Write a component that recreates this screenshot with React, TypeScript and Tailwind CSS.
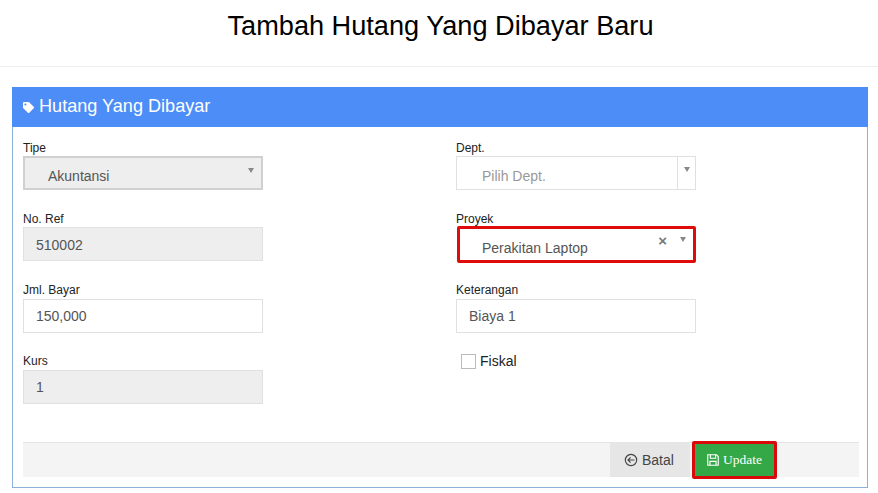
import { FaTag } from "react-icons/fa";

const Caret = () => <span className="block w-0 h-0 border-x-[3.5px] border-x-transparent border-t-[5px] border-t-[#888888]" />;

const Field = ({ label, wide, lift, children }: { label: string; wide?: boolean; lift?: boolean; children: React.ReactNode }) => (
    <div className={wide ? "mb-[21px]" : "mb-[20px]"}>
        <div className={`h-[17px] text-[12px] leading-[15px] text-[#222222] ${lift ? "pt-[1px]" : "pt-[2px]"}`}>{label}</div>
        {children}
    </div>
);

const TextBox = ({ value, disabled, lift }: { value: string; disabled?: boolean; lift?: boolean }) => (
    <div className={`h-[34px] w-[240px] border border-[#e0e0e0] px-[12px] text-[14px] text-[#555555] ${lift ? "leading-[32px]" : "leading-[34px]"} ${disabled ? "bg-[#eeeeee]" : "bg-white"}`}>
        {value}
    </div>
);

export default function App() {
    return (
        <div className="w-[878px] h-[493px] overflow-hidden bg-white font-['Liberation_Sans',Arial,sans-serif]">
            <div className="h-[67px] border-b border-[#eeeeee] pt-[8px] pl-[3px] text-center text-[27.15px] leading-[36px] text-black">
                Tambah Hutang Yang Dibayar Baru
            </div>

            <div className="mt-[20px] ml-[12px] w-[856px] h-[401px] border border-[#8db0d8]">
                <div className="-mt-px -mx-px h-[40px] bg-[#4d8df7] flex items-center pl-[11px] pb-[1px] text-white text-[18.1px]">
                    <FaTag className="w-[11px] h-[11px] mr-[5px] mt-[2px]" />
                    Hutang Yang Dibayar
                </div>

                <div className="pl-[10px] pr-[8px] pt-[12px]">
                    <div className="grid grid-cols-[433px_240px] h-[303px]">
                        <div>
                            <Field label="Tipe">
                                <div className="relative h-[34px] w-[240px] border-2 border-[#d0d0d0] bg-[#eeeeee] pl-[23px] text-[14px] leading-[36px] text-[#555555]">
                                    Akuntansi
                                    <span className="absolute right-[7px] top-[10px]"><Caret /></span>
                                </div>
                            </Field>
                            <Field label="No. Ref" wide><TextBox value="510002" disabled /></Field>
                            <Field label="Jml. Bayar" lift><TextBox value="150,000" lift /></Field>
                            <Field label="Kurs" lift><TextBox value="1" disabled lift /></Field>
                        </div>
                        <div>
                            <Field label="Dept.">
                                <div className="flex h-[34px] w-[240px] border border-[#e0e0e0] bg-white text-[14px] text-[#999999]">
                                    <div className="flex-1 pl-[25px] leading-[38px]">Pilih Dept.</div>
                                    <div className="w-[18px] border-l border-[#e0e0e0] flex justify-center pt-[10px]"><Caret /></div>
                                </div>
                            </Field>
                            <Field label="Proyek" wide>
                                <div className="relative h-[37px] w-[239px] ml-[1px] -mt-[1px] -mb-[2px] rounded-[2px] border-[3px] border-[#e00b0b] bg-white pl-[22px] text-[14px] leading-[38px] text-[#555555]">
                                    Perakitan Laptop
                                    <span className="absolute right-[26px] top-[2px] text-[15px] leading-[20px] font-bold text-[#777777]">×</span>
                                    <span className="absolute right-[7px] top-[8px]"><Caret /></span>
                                </div>
                            </Field>
                            <Field label="Keterangan" lift><TextBox value="Biaya 1" lift /></Field>
                            <div className="flex items-center ml-[5px] mt-[-2px] text-[14px] text-[#222222]">
                                <span className="w-[15px] h-[15px] border border-[#bbbbbb] bg-white mr-[4px]" />
                                Fiskal
                            </div>
                        </div>
                    </div>

                    <div className="flex justify-end h-[35px] w-[836px] border-t border-[#e4e4e4] bg-[#f4f4f4] pr-[82px]">
                        <div className="flex items-center h-[35px] -mt-px w-[80px] bg-[#e6e6e6] pl-[14px] pt-[1px] text-[14px] text-[#444444]">
                            <svg viewBox="0 0 16 16" className="w-[14px] h-[14px] mr-[4px]" fill="none" stroke="#444444" strokeWidth="1.3">
                                <circle cx="8" cy="8" r="6.5" />
                                <path d="M12 8H5M7.5 5L4.5 8l3 3" />
                            </svg>
                            Batal
                        </div>
                        <div className="relative -mt-[2px] flex items-center h-[38px] w-[85px] ml-[2px] pl-[11px] rounded-[2px] border-[3px] border-[#d90a0a] bg-[#34a846] text-white text-[13.5px] font-['Liberation_Serif',serif]">
                            <svg viewBox="0 0 16 16" className="w-[14px] h-[14px] mr-[3px]" fill="none" stroke="#ffffff" strokeWidth="1.3">
                                <path d="M2 2h10l2 2v10H2z" />
                                <path d="M5 2v4h6V2M4.5 14V9.5h7V14" />
                            </svg>
                            Update
                        </div>
                    </div>
                </div>
            </div>
        </div>
    );
}
